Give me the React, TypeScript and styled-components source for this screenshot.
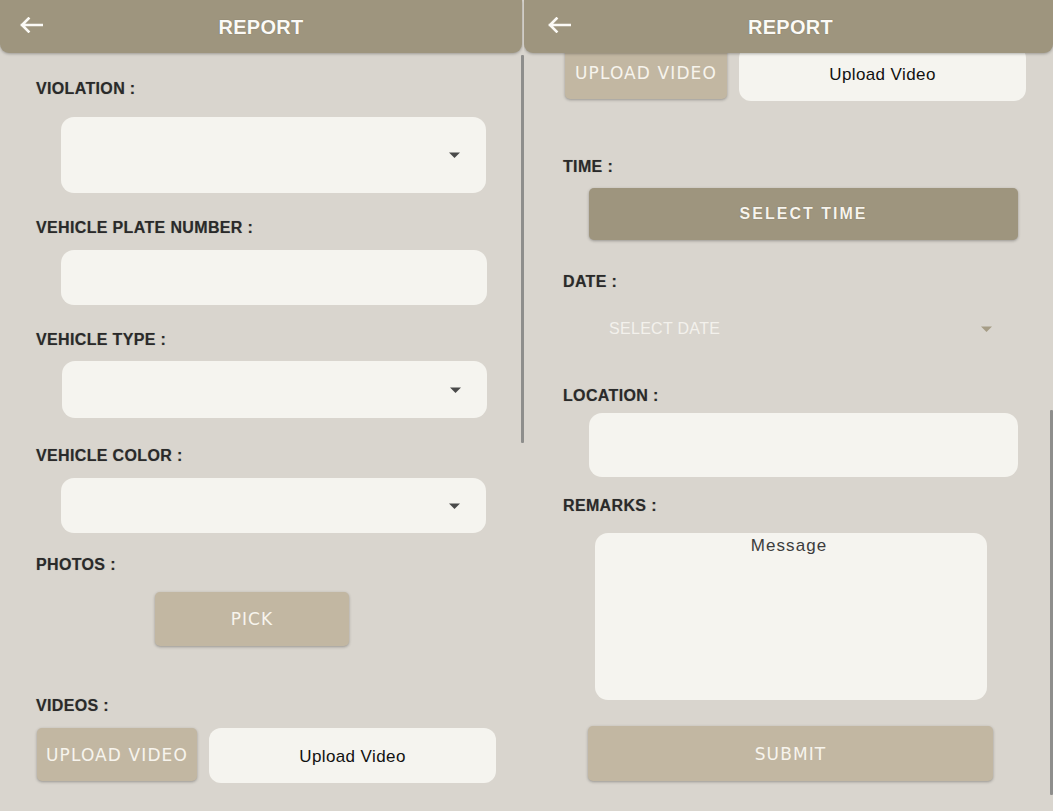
import React from "react";
import styled, { createGlobalStyle } from "styled-components";

const Global = createGlobalStyle`
  html, body { margin: 0; padding: 0; background: #d9d5ce; overflow: hidden; }
  * { box-sizing: border-box; }
`;

const Page = styled.div`
  display: flex;
  width: 1053px;
  height: 811px;
  background: #d9d5ce;
  font-family: "Liberation Sans", Arial, sans-serif;
`;

const Panel = styled.div<{ $w: number }>`
  position: relative;
  width: ${(p) => p.$w}px;
  height: 811px;
  display: flex;
  flex-direction: column;
  overflow: hidden;
`;

const Header = styled.header<{ $ml: number; $mr: number; $shift: number }>`
  position: relative;
  z-index: 2;
  height: 53px;
  flex: none;
  margin: 0 ${(p) => p.$mr}px 0 ${(p) => p.$ml}px;
  padding-left: ${(p) => p.$shift}px;
  background: #9e957e;
  border-radius: 0 0 9px 9px;
  box-shadow: 0 1px 3px rgba(0, 0, 0, 0.28);
  display: flex;
  align-items: center;
  justify-content: center;
`;

const BackButton = styled.span<{ $left: number }>`
  position: absolute;
  left: ${(p) => p.$left}px;
  top: 17px;
  width: 24px;
  height: 16px;
  display: flex;
`;

const Title = styled.h1`
  margin: 1px 0 0;
  color: #fbfaf6;
  font-family: "Liberation Sans", Arial, sans-serif;
  font-weight: 700;
  font-size: 20px;
  letter-spacing: 0.3px;
  text-shadow: 0 0 1px rgba(60, 55, 40, 0.5);
`;

const Body = styled.div`
  flex: 1;
  overflow: hidden;
  position: relative;
`;

const Content = styled.div<{ $shift: number }>`
  display: flex;
  flex-direction: column;
  margin-top: ${(p) => p.$shift}px;
`;

const Label = styled.div<{ $mt: number; $ml: number }>`
  margin: ${(p) => p.$mt}px 0 0 ${(p) => p.$ml}px;
  height: 18px;
  line-height: 18px;
  font-family: "Liberation Sans", Arial, sans-serif;
  font-weight: 700;
  font-size: 16px;
  letter-spacing: 0.35px;
  color: #2a2a2a;
  text-shadow: 0 0 1px rgba(0, 0, 0, 0.3);
`;

const Box = styled.div<{ $mt: number; $ml: number; $mr: number; $h: number }>`
  margin: ${(p) => p.$mt}px ${(p) => p.$mr}px 0 ${(p) => p.$ml}px;
  height: ${(p) => p.$h}px;
  background: #f5f4ef;
  border-radius: 13px;
  display: flex;
  align-items: center;
  justify-content: flex-end;
  padding-right: 26px;
`;

const MessageBox = styled.div<{ $mt: number; $ml: number; $mr: number; $h: number }>`
  margin: ${(p) => p.$mt}px ${(p) => p.$mr}px 0 ${(p) => p.$ml}px;
  height: ${(p) => p.$h}px;
  background: #f5f4ef;
  border-radius: 13px;
  display: flex;
  justify-content: center;
  padding-top: 3px;
  padding-right: 4px;
  font-family: "Liberation Sans", Arial, sans-serif;
  font-size: 17px;
  letter-spacing: 1.1px;
  color: #3c3c3c;
`;

const DateRow = styled.div<{ $mt: number; $ml: number; $mr: number }>`
  margin: ${(p) => p.$mt}px ${(p) => p.$mr}px 0 ${(p) => p.$ml}px;
  height: 40px;
  display: flex;
  align-items: center;
  justify-content: space-between;
  padding: 0 26px 0 20px;
`;

const DatePlaceholder = styled.span`
  font-family: "Liberation Sans", Arial, sans-serif;
  font-size: 16px;
  letter-spacing: 0.3px;
  color: #f3f1ec;
`;

const ActionButton = styled.button<{
  $mt: number;
  $ml: number;
  $w?: number;
  $mr?: number;
  $h: number;
  $dark?: boolean;
}>`
  margin: ${(p) => p.$mt}px ${(p) => p.$mr ?? 0}px 0 ${(p) => p.$ml}px;
  ${(p) => (p.$w ? `width: ${p.$w}px; flex: none;` : "")}
  height: ${(p) => p.$h}px;
  border: none;
  border-radius: 5px;
  background: ${(p) => (p.$dark ? "#9e957e" : "#c2b7a2")};
  box-shadow: 0 1px 3px rgba(0, 0, 0, 0.3);
  color: #f7f4ed;
  display: flex;
  align-items: center;
  justify-content: center;
  padding: 0;
  white-space: nowrap;
  font-family: ${(p) =>
    p.$dark ? `"Liberation Sans", Arial, sans-serif` : `"DejaVu Sans", sans-serif`};
  font-weight: ${(p) => (p.$dark ? 700 : 400)};
  font-size: ${(p) => (p.$dark ? 16 : 17)}px;
  letter-spacing: ${(p) => (p.$dark ? 2 : 1.1)}px;
  ${(p) => (p.$dark ? "text-shadow: 0 0 1px rgba(60,55,40,0.5);" : "")}
`;

const VideoRow = styled.div<{ $mt: number; $ml: number }>`
  display: flex;
  align-items: flex-start;
  gap: 12px;
  margin: ${(p) => p.$mt}px 0 0 ${(p) => p.$ml}px;
`;

const VideoName = styled.div`
  width: 287px;
  height: 55px;
  background: #f5f4ef;
  border-radius: 12px;
  display: flex;
  align-items: center;
  justify-content: center;
  padding-top: 2px;
  font-family: "Liberation Sans", Arial, sans-serif;
  font-size: 17px;
  letter-spacing: 0.4px;
  color: #111;
`;

const ScrollThumb = styled.div<{ $top: number; $h: number }>`
  position: absolute;
  right: 0;
  top: ${(p) => p.$top}px;
  width: 3px;
  height: ${(p) => p.$h}px;
  background: #8e8e8c;
  border-radius: 1px;
  z-index: 3;
`;

const Caret = ({ color }: { color: string }) => (
  <svg width="11" height="6" viewBox="0 0 11 6">
    <path d="M0 0.5 H11 L5.5 6 Z" fill={color} />
  </svg>
);

const BackArrow = () => (
  <svg width="24" height="16" viewBox="0 0 24 16">
    <path
      d="M23 8 H3 M9.5 1.5 L3 8 L9.5 14.5"
      fill="none"
      stroke="#fbfaf6"
      strokeWidth="2.6"
      strokeLinecap="square"
    />
  </svg>
);

function LeftScreen() {
  return (
    <Panel $w={524}>
      <Header $ml={0} $mr={2} $shift={0}>
        <BackButton $left={19}>
          <BackArrow />
        </BackButton>
        <Title>REPORT</Title>
      </Header>
      <ScrollThumb $top={55} $h={388} />
      <Body>
        <Content $shift={0}>
          <Label $mt={27} $ml={36}>VIOLATION :</Label>
          <Box $mt={19} $ml={61} $mr={38} $h={76}>
            <Caret color="#4a4a4a" />
          </Box>
          <Label $mt={26} $ml={36}>VEHICLE PLATE NUMBER :</Label>
          <Box $mt={13} $ml={61} $mr={37} $h={55} />
          <Label $mt={26} $ml={36}>VEHICLE TYPE :</Label>
          <Box $mt={12} $ml={62} $mr={37} $h={57}>
            <Caret color="#4a4a4a" />
          </Box>
          <Label $mt={29} $ml={36}>VEHICLE COLOR :</Label>
          <Box $mt={13} $ml={61} $mr={38} $h={55}>
            <Caret color="#4a4a4a" />
          </Box>
          <Label $mt={23} $ml={36}>PHOTOS :</Label>
          <ActionButton $mt={18} $ml={155} $w={194} $h={54}>
            PICK
          </ActionButton>
          <Label $mt={51} $ml={36}>VIDEOS :</Label>
          <VideoRow $mt={13} $ml={37}>
            <ActionButton $mt={0} $ml={0} $w={160} $h={53}>
              UPLOAD VIDEO
            </ActionButton>
            <VideoName>Upload Video</VideoName>
          </VideoRow>
        </Content>
      </Body>
    </Panel>
  );
}

function RightScreen() {
  return (
    <Panel $w={529}>
      <Header $ml={0} $mr={0} $shift={4}>
        <BackButton $left={23}>
          <BackArrow />
        </BackButton>
        <Title>REPORT</Title>
      </Header>
      <ScrollThumb $top={410} $h={385} />
      <Body>
        <Content $shift={-7}>
          <VideoRow $mt={0} $ml={41}>
            <ActionButton $mt={0} $ml={0} $w={162} $h={53}>
              UPLOAD VIDEO
            </ActionButton>
            <VideoName>Upload Video</VideoName>
          </VideoRow>
          <Label $mt={57} $ml={39}>TIME :</Label>
          <ActionButton $mt={12} $ml={65} $mr={35} $h={52} $dark>
            SELECT TIME
          </ActionButton>
          <Label $mt={33} $ml={39}>DATE :</Label>
          <DateRow $mt={18} $ml={65} $mr={35}>
            <DatePlaceholder>SELECT DATE</DatePlaceholder>
            <Caret color="#a69d86" />
          </DateRow>
          <Label $mt={38} $ml={39}>LOCATION :</Label>
          <Box $mt={8} $ml={65} $mr={35} $h={64} />
          <Label $mt={20} $ml={39}>REMARKS :</Label>
          <MessageBox $mt={18} $ml={71} $mr={66} $h={167}>
            Message
          </MessageBox>
          <ActionButton $mt={26} $ml={64} $mr={60} $h={55}>
            SUBMIT
          </ActionButton>
        </Content>
      </Body>
    </Panel>
  );
}

export default function App() {
  return (
    <>
      <Global />
      <Page>
        <LeftScreen />
        <RightScreen />
      </Page>
    </>
  );
}
